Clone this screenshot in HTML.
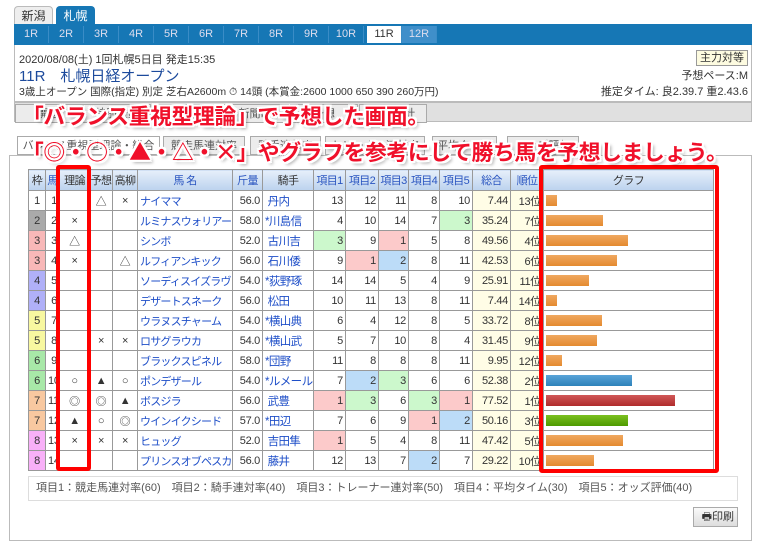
<!DOCTYPE html>
<html><head><meta charset="utf-8"><style>
*{margin:0;padding:0;box-sizing:border-box}
body{width:758px;height:548px;background:#fff;font-family:"Liberation Sans","Noto Sans CJK JP",sans-serif;font-size:11px;color:#333;position:relative;overflow:hidden}
.a{position:absolute}
.tab{position:absolute;top:6px;height:19px;width:39px;border:1px solid #bbb;border-bottom:none;border-radius:4px 4px 0 0;text-align:center;line-height:18px;font-size:12px}
.rbar{left:14px;top:24px;width:738px;height:21px;background:#1677b5}
.rbar span{position:absolute;top:2px;height:17px;width:35px;text-align:center;line-height:17px;color:#dde;font-size:11px;border-right:1px solid #3a8cc6}
.info{left:14px;top:45px;width:738px;height:57px;border:1px solid #bbb;border-top:none;background:#fff}
.t1{left:14px;top:102px;width:738px;height:20px;background:#e0e0e0;border:1px solid #bbb}
.t1 span{position:absolute;top:1px;height:19px;width:68px;border:1px solid #aaa;background:#ececec;text-align:center;line-height:18px;color:#555}
.t2 span{position:absolute;top:136px;height:19px;border:1px solid #aaa;background:#ececec;text-align:center;line-height:18px;color:#555}
.panel{left:9px;top:155px;width:743px;height:386px;border:1px solid #bbb;background:#fff}
table{position:absolute;left:28px;top:169px;border-collapse:collapse;table-layout:fixed;width:685px}
td,th{border:1px solid #999;height:20px;font-size:11px;padding:0 2px;white-space:nowrap;overflow:hidden;letter-spacing:-0.3px}
th{height:21px;background:linear-gradient(#e6effa,#bcd2ee);font-weight:normal;color:#2a55c0;font-size:11px;padding:0;letter-spacing:-0.6px}
th.d{color:#333}
td{text-align:right}
td.c{text-align:center}
td.n{text-align:left;color:#1f4fc8;font-size:11px;letter-spacing:-0.8px}
td.j{text-align:left;color:#1f4fc8;font-size:11.5px;letter-spacing:-0.6px}
td.y{background:#fffde6}
.g{background:#ccf8cc}.p{background:#fccaca}.b{background:#bcdcf8}
.bar{display:block;height:11px;background:linear-gradient(#f0a860,#e48a30)}
.ov{position:absolute;left:22px;font-size:21.8px;font-weight:bold;color:#f0102a;letter-spacing:-0.36px;font-family:"Noto Sans CJK JP",sans-serif;white-space:nowrap;
text-shadow:2px 0 #fff,-2px 0 #fff,0 2px #fff,0 -2px #fff,2px 2px #fff,-2px -2px #fff,2px -2px #fff,-2px 2px #fff,3px 3px 3px rgba(0,0,0,.35)}
.rb{position:absolute;border:4px solid #f00;border-radius:3px}
</style></head><body>
<div class="tab" style="left:14px;background:#eee;color:#333">新潟</div>
<div class="tab" style="left:56px;background:#1677b5;color:#fff;border-color:#1677b5">札幌</div>
<div class="a rbar">
<span style="left:0">1R</span><span style="left:35px">2R</span><span style="left:70px">3R</span><span style="left:105px">4R</span><span style="left:140px">5R</span><span style="left:175px">6R</span><span style="left:210px">7R</span><span style="left:245px">8R</span><span style="left:280px">9R</span><span style="left:315px">10R</span><span style="left:353px;background:#fff;color:#333">11R</span><span style="left:388px;background:#3f8fca">12R</span>
</div>
<div class="a info">
<div class="a" style="left:4px;top:6px;font-size:11px">2020/08/08(土) 1回札幌5日目 発走15:35</div>
<div class="a" style="left:4px;top:20px;font-size:15px;color:#1c4a9c">11R　札幌日経オープン</div>
<div class="a" style="left:4px;top:39px;font-size:10.5px">3歳上オープン 国際(指定) 別定 芝右A2600m ⏱ 14頭 (本賞金:2600 1000 650 390 260万円)</div>
<div class="a" style="right:3px;top:5px;border:1px solid #999;background:#fdfbe0;padding:0 3px;font-size:11px;line-height:14px">主力対等</div>
<div class="a" style="right:3px;top:22px">予想ペース:M</div>
<div class="a" style="right:3px;top:38px">推定タイム: 良2.39.7 重2.43.6</div>
</div>
<div class="a t1">
<span style="left:0">開催</span><span style="left:68px">特別登録</span><span style="left:137px">出馬表</span><span style="left:206px">新聞印</span><span style="left:275px">予想</span><span style="left:344px">馬券集計</span>
</div>
<div class="a panel"></div>
<div class="t2">
<span style="left:17px;width:143px;background:#fff">バランス重視型理論・総合</span><span style="left:163px;width:82px">競走馬連対率</span><span style="left:250px;width:71px">騎手連対率</span><span style="left:325px;width:100px">トレーナー連対率</span><span style="left:432px;width:65px">平均タイム</span><span style="left:507px;width:72px">オッズ評価</span>
</div>
<table>
<colgroup><col style="width:17px"><col style="width:14px"><col style="width:30px"><col style="width:23px"><col style="width:25px"><col style="width:95px"><col style="width:30px"><col style="width:51px"><col style="width:32px"><col style="width:33px"><col style="width:30px"><col style="width:31px"><col style="width:33px"><col style="width:38px"><col style="width:33px"><col style="width:170px"></colgroup>
<tr><th class="d">枠</th><th>馬</th><th class="d">理論</th><th class="d">予想</th><th class="d">高柳</th><th>馬 名</th><th>斤量</th><th class="d">騎手</th><th>項目1</th><th>項目2</th><th>項目3</th><th>項目4</th><th>項目5</th><th>総合</th><th>順位</th><th class="d">グラフ</th></tr>
<tr><td class="c">1</td><td>1</td><td class="c"></td><td class="c">△</td><td class="c">×</td><td class="n">ナイママ</td><td>56.0</td><td class="j">&nbsp;丹内</td><td>13</td><td>12</td><td>11</td><td>8</td><td>10</td><td class="y">7.44</td><td class="y">13位</td><td><i class="bar" style="width:11px"></i></td></tr>
<tr><td class="c" style="background:#aaa">2</td><td>2</td><td class="c">×</td><td class="c"></td><td class="c"></td><td class="n">ルミナスウォリアー</td><td>58.0</td><td class="j">*川島信</td><td>4</td><td>10</td><td>14</td><td>7</td><td class="g">3</td><td class="y">35.24</td><td class="y">7位</td><td><i class="bar" style="width:57px"></i></td></tr>
<tr><td class="c" style="background:#f8b8b8">3</td><td>3</td><td class="c">△</td><td class="c"></td><td class="c"></td><td class="n">シンボ</td><td>52.0</td><td class="j">&nbsp;古川吉</td><td class="g">3</td><td>9</td><td class="p">1</td><td>5</td><td>8</td><td class="y">49.56</td><td class="y">4位</td><td><i class="bar" style="width:82px"></i></td></tr>
<tr><td class="c" style="background:#f8b8b8">3</td><td>4</td><td class="c">×</td><td class="c"></td><td class="c">△</td><td class="n">ルフィアンキック</td><td>56.0</td><td class="j">&nbsp;石川倭</td><td>9</td><td class="p">1</td><td class="b">2</td><td>8</td><td>11</td><td class="y">42.53</td><td class="y">6位</td><td><i class="bar" style="width:71px"></i></td></tr>
<tr><td class="c" style="background:#b0b0f8">4</td><td>5</td><td></td><td></td><td></td><td class="n">ソーディスイズラヴ</td><td>54.0</td><td class="j">*荻野琢</td><td>14</td><td>14</td><td>5</td><td>4</td><td>9</td><td class="y">25.91</td><td class="y">11位</td><td><i class="bar" style="width:43px"></i></td></tr>
<tr><td class="c" style="background:#b0b0f8">4</td><td>6</td><td></td><td></td><td></td><td class="n">デザートスネーク</td><td>56.0</td><td class="j">&nbsp;松田</td><td>10</td><td>11</td><td>13</td><td>8</td><td>11</td><td class="y">7.44</td><td class="y">14位</td><td><i class="bar" style="width:11px"></i></td></tr>
<tr><td class="c" style="background:#f8f8a0">5</td><td>7</td><td></td><td></td><td></td><td class="n">ウラヌスチャーム</td><td>54.0</td><td class="j">*横山典</td><td>6</td><td>4</td><td>12</td><td>8</td><td>5</td><td class="y">33.72</td><td class="y">8位</td><td><i class="bar" style="width:56px"></i></td></tr>
<tr><td class="c" style="background:#f8f8a0">5</td><td>8</td><td class="c"></td><td class="c">×</td><td class="c">×</td><td class="n">ロサグラウカ</td><td>54.0</td><td class="j">*横山武</td><td>5</td><td>7</td><td>10</td><td>8</td><td>4</td><td class="y">31.45</td><td class="y">9位</td><td><i class="bar" style="width:51px"></i></td></tr>
<tr><td class="c" style="background:#a8e8a8">6</td><td>9</td><td></td><td></td><td></td><td class="n">ブラックスピネル</td><td>58.0</td><td class="j">*団野</td><td>11</td><td>8</td><td>8</td><td>8</td><td>11</td><td class="y">9.95</td><td class="y">12位</td><td><i class="bar" style="width:16px"></i></td></tr>
<tr><td class="c" style="background:#a8e8a8">6</td><td>10</td><td class="c">○</td><td class="c">▲</td><td class="c">○</td><td class="n">ポンデザール</td><td>54.0</td><td class="j">*ルメール</td><td>7</td><td class="b">2</td><td class="g">3</td><td>6</td><td>6</td><td class="y">52.38</td><td class="y">2位</td><td><i class="bar" style="width:86px;background:linear-gradient(#5aa4d8,#2e82ba)"></i></td></tr>
<tr><td class="c" style="background:#f8c8a0">7</td><td>11</td><td class="c">◎</td><td class="c">◎</td><td class="c">▲</td><td class="n">ボスジラ</td><td>56.0</td><td class="j">&nbsp;武豊</td><td class="p">1</td><td class="g">3</td><td>6</td><td class="g">3</td><td class="p">1</td><td class="y">77.52</td><td class="y">1位</td><td><i class="bar" style="width:129px;background:linear-gradient(#d05858,#b02c2c)"></i></td></tr>
<tr><td class="c" style="background:#f8c8a0">7</td><td>12</td><td class="c">▲</td><td class="c">○</td><td class="c">◎</td><td class="n">ウインイクシード</td><td>57.0</td><td class="j">*田辺</td><td>7</td><td>6</td><td>9</td><td class="p">1</td><td class="b">2</td><td class="y">50.16</td><td class="y">3位</td><td><i class="bar" style="width:82px;background:linear-gradient(#7cc020,#4e9a00)"></i></td></tr>
<tr><td class="c" style="background:#f8b0f8">8</td><td>13</td><td class="c">×</td><td class="c">×</td><td class="c">×</td><td class="n">ヒュッグ</td><td>52.0</td><td class="j">&nbsp;吉田隼</td><td class="p">1</td><td>5</td><td>4</td><td>8</td><td>11</td><td class="y">47.42</td><td class="y">5位</td><td><i class="bar" style="width:77px"></i></td></tr>
<tr><td class="c" style="background:#f8b0f8">8</td><td>14</td><td></td><td></td><td></td><td class="n">プリンスオブペスカ</td><td>56.0</td><td class="j">&nbsp;藤井</td><td>12</td><td>13</td><td>7</td><td class="b">2</td><td>7</td><td class="y">29.22</td><td class="y">10位</td><td><i class="bar" style="width:48px"></i></td></tr>
</table>
<div class="a" style="left:28px;top:476px;width:710px;height:25px;border:1px solid #ddd;line-height:23px;padding-left:7px;color:#555">項目1：競走馬連対率(60)　項目2：騎手連対率(40)　項目3：トレーナー連対率(50)　項目4：平均タイム(30)　項目5：オッズ評価(40)</div>
<div class="a" style="left:693px;top:507px;width:45px;height:20px;border:1px solid #aaa;background:linear-gradient(#fafafa,#ddd);line-height:18px;text-align:right;padding-right:3px">🖶印刷</div>
<div class="rb" style="left:56px;top:165px;width:35px;height:306px"></div>
<div class="rb" style="left:539px;top:165px;width:180px;height:308px"></div>
<div class="ov" style="top:100px">「バランス重視型理論」で予想した画面。</div>
<div class="ov" style="top:136px">「◎・○・▲・△・×」やグラフを参考にして勝ち馬を予想しましょう。</div>
</body></html>
